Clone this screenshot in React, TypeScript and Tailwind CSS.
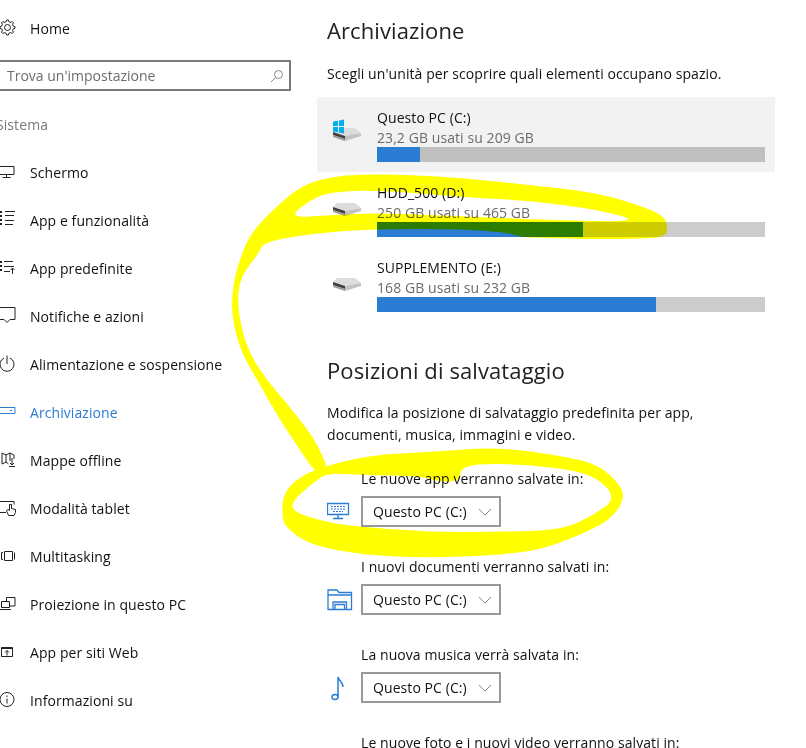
const font = "font-['Open_Sans',sans-serif]";

const I = ({ children }: { children: React.ReactNode }) => (
  <svg width="20" height="24" viewBox="0 0 20 24" fill="none" stroke="#222" strokeWidth="1" className="shrink-0">
    {children}
  </svg>
);

const gearPath = () => {
  let d = "";
  for (let i = 0; i < 32; i++) {
    const tooth = i % 4 < 2;
    const r = tooth ? 7.6 : 5.8;
    const a = ((i - 0.5) * Math.PI) / 16;
    d += `${i ? "L" : "M"}${(7.5 + r * Math.cos(a)).toFixed(2)} ${(11.5 + r * Math.sin(a)).toFixed(2)}`;
  }
  return d + "Z";
};

const Squares = ({ ys }: { ys: number[] }) => (
  <>
    {ys.map((y) => (
      <rect key={y} x="0" y={y} width="2" height="2" fill="#222" stroke="none" />
    ))}
  </>
);

const navItems = [
  { label: "Schermo", icon: <path d="M-2 6.500h16v8H-2M6.500 14.500v3M2.500 17.500h8" /> },
  { label: "App e funzionalità", icon: <><Squares ys={[3, 7, 11, 15]} /><path d="M5 3.500h10M5 7.500h9M5 12.500h9M5 16.500h8" /></> },
  { label: "App predefinite", icon: <><Squares ys={[5, 9, 13]} /><path d="M4 5.500h9M4 10.500h10M4 15.500h6M12.500 18v-6M10.500 14l2-2 2 2" /></> },
  { label: "Notifiche e azioni", icon: <path d="M-2 3.500h17v12h-5l-3 3-3-3h-6" /> },
  { label: "Alimentazione e sospensione", icon: <path d="M4 6A7 7 0 1 0 10 6M7 3.500V12" /> },
  { label: "Archiviazione", active: true, icon: <path d="M-2 7.500h17v6H-2M10 10.500h2" stroke="#2b7cd3" /> },
  { label: "Mappe offline", icon: <path d="M2 5l4 2 4-2 4 2v4M2 5v11l4-2 2.500 2M6 7v7M10 5v8M12 10v7M10 15l2 2 2-2M9 18.500h6" /> },
  { label: "Modalità tablet", icon: <path d="M-2 5.500h16v3M-2 16.500h8M9.500 8.500v6l-1.500-1-1.500 1 2 5h5.500l1.500-3v-3l-4-1v-4z" /> },
  { label: "Multitasking", icon: <path d="M4.500 7.500h8v9h-8zM3 8.500H1.500v7H3M14.500 8.500v7" /> },
  { label: "Proiezione in questo PC", icon: <path d="M6.500 9V5.500h8.500v8.500H10M1.500 9.500h8v6h-8zM0 17.500h11" /> },
  { label: "App per siti Web", icon: <path d="M1.500 7.500h11v9h-11zM1.500 8.500h11M7 15.500v-5M5 12.500l2-2 2 2" /> },
  { label: "Informazioni su", icon: <><circle cx="7" cy="11.500" r="7" /><path d="M7 10.500v5M7 7.500v1.500" /></> },
];

const drives = [
  { name: "Questo PC (C:)", usage: "23,2 GB usati su 209 GB", pct: 11, system: true },
  { name: "HDD_500 (D:)", usage: "250 GB usati su 465 GB", pct: 53.1 },
  { name: "SUPPLEMENTO (E:)", usage: "168 GB usati su 232 GB", pct: 72 },
];

const saves = [
  {
    label: "Le nuove app verranno salvate in:",
    icon: (
      <>
        <path d="M.5 4.500h21v11H.5z" strokeWidth="1.300" />
        <path d="M11 15.500v4M6 19.500h10" strokeWidth="1.300" />
        <path d="M4 7.500h14M4 10h14M6 12.500h10" strokeDasharray="2 1" />
      </>
    ),
  },
  {
    label: "I nuovi documenti verranno salvati in:",
    icon: (
      <path d="M1 22.500V3h9l2 2.500h12.500v17zM1 8h23.500M6 22.500v-7.500h13.500v7.500M8 22.500v-5h9.500v5" strokeWidth="1.300" />
    ),
  },
  {
    label: "La nuova musica verrà salvata in:",
    icon: (
      <>
        <ellipse cx="8" cy="22" rx="3" ry="2.400" strokeWidth="1.500" />
        <path d="M11 21.500V2c1 4 5 5 5 10" strokeWidth="1.500" />
      </>
    ),
  },
];

function Drive({ system }: { system?: boolean }) {
  return (
    <svg width="30" height="26" viewBox="0 0 30 26" className="shrink-0">
      <path d="M6 12h18l6 5-16 3-12-4z" fill="#dcdcdc" />
      <path d="M2 16l12 4v3L2 19z" fill="#3f3f3f" />
      <path d="M2 19l12 4v2L2 21z" fill="#9a9a9a" />
      <path d="M14 20l16-3v3l-16 5z" fill="#c2c2c2" />
      {system && (
        <path d="M2 5.500l5-.8v5.300H2zM8 4.500l5-1v6.500H8zM2 11h5v5.300l-5-.8zM8 11h5v6.500l-5-1z" fill="#00adef" />
      )}
    </svg>
  );
}

// turns traced outline points into a soft marker edge
const smooth = (pts: number[][]) => {
  const mid = (a: number[], b: number[]) => `${(a[0] + b[0]) / 2} ${(a[1] + b[1]) / 2}`;
  let d = `M${mid(pts[pts.length - 1], pts[0])}`;
  pts.forEach((p, i) => {
    d += `Q${p[0]} ${p[1]} ${mid(p, pts[(i + 1) % pts.length])}`;
  });
  return d + "Z";
};

const loopOuter = [
  [303, 185], [330, 177], [363, 174], [410, 175], [463, 178], [530, 185], [600, 193], [650, 209], [664, 217], [667, 224], [667, 237],
  [633, 239], [583, 239], [550, 238], [520, 237], [510, 233], [463, 229], [377, 229], [330, 232], [290, 237], [263, 243], [259, 253],
  [240, 277], [237, 307], [247, 350], [267, 380], [284, 400], [300, 420], [315, 440], [330, 472], [316, 474], [298, 447], [280, 420],
  [260, 385], [240, 350], [232, 317], [232, 293], [237, 267], [250, 233], [280, 203],
];
const loopHole = [
  [288, 218], [310, 200], [330, 192], [377, 190], [463, 197], [533, 201], [600, 210], [643, 222], [550, 220], [430, 215], [377, 213], [330, 215],
];
const ringOuter = [
  [318, 468], [370, 455], [430, 452], [497, 447], [563, 456], [600, 465], [623, 488], [623, 502], [610, 520], [580, 535], [540, 550],
  [497, 555], [430, 558], [363, 555], [310, 545], [285, 527], [282, 515], [283, 495], [295, 480],
];
const ringHole = [
  [327, 473], [363, 475], [420, 476], [440, 482], [460, 481], [461, 466], [497, 463], [563, 468], [597, 477], [616, 498], [597, 513],
  [563, 530], [497, 532], [430, 532], [363, 527], [330, 523], [292, 512], [293, 500], [313, 483],
];

export default function App() {
  return (
    <div className={`relative flex h-[748px] w-[806px] overflow-hidden bg-white tracking-[0.08px] text-[#111] ${font}`}>
      <aside className="w-[317px] shrink-0 text-[14px]">
        <div className="mt-1 flex h-12 items-center gap-[10px]">
          <I>
            <path d={gearPath()} />
            <circle cx="7.500" cy="11.500" r="3" />
          </I>
          <span>Home</span>
        </div>
        <div className="-ml-1 mt-2 flex h-[31px] w-[295px] items-center justify-between border-2 border-[#7a7a7a] pl-[9px] pr-[5px] tracking-normal text-[#6d6d6d]">
          <span>Trova un'impostazione</span>
          <svg width="14" height="14" viewBox="0 0 14 14" fill="none" stroke="#888" strokeWidth="1">
            <circle cx="8.500" cy="5.500" r="4" />
            <path d="M5.500 8.500L1 13" />
          </svg>
        </div>
        <div className="-ml-1 mt-[9px] flex h-12 items-center text-[#7a7a7a]">Sistema</div>
        <nav>
          {navItems.map((item) => (
            <div key={item.label} className={`flex h-12 items-center gap-[10px] ${item.active ? "text-[#2b7cd3]" : ""}`}>
              <I>{item.icon}</I>
              <span>{item.label}</span>
            </div>
          ))}
        </nav>
      </aside>

      <main className="w-[458px] shrink-0">
        <h1 className="ml-[10px] mt-[14px] text-[22px] leading-8 tracking-[0.1px] text-[#222]">Archiviazione</h1>
        <p className="ml-[10px] mt-[18px] text-[14px] leading-5">Scegli un'unità per scoprire quali elementi occupano spazio.</p>
        <div className="mt-[13px]">
          {drives.map((d) => (
            <div key={d.name} className={`flex h-[75px] pl-[14px] pr-[10px] ${d.system ? "bg-[#f2f2f2]" : ""}`}>
              <div className="mt-[19px] w-[46px]">
                <Drive system={d.system} />
              </div>
              <div className="flex-1 pt-[11px]">
                <div className="text-[14px] leading-5">{d.name}</div>
                <div className="text-[14px] leading-5 text-[#6b6b6b]">{d.usage}</div>
                <div className={`-mt-px h-[15px] ${d.system ? "bg-[#c0c0c0]" : "bg-[#cccccc]"}`}>
                  <div className="h-full bg-[#2b7cd3]" style={{ width: `${d.pct}%` }} />
                </div>
              </div>
            </div>
          ))}
        </div>
        <h2 className="ml-[10px] mt-[32px] text-[22px] leading-8 tracking-[0.1px] text-[#222]">Posizioni di salvataggio</h2>
        <p className="ml-[10px] mt-4 w-[420px] text-[14px] leading-[22px]">
          Modifica la posizione di salvataggio predefinita per app, documenti, musica, immagini e video.
        </p>
        <div className="ml-[10px] mt-[23px]">
          {saves.map((s) => (
            <div key={s.label} className="mb-[28px] h-[60px]">
              <div className="ml-[34px] text-[14px] leading-5">{s.label}</div>
              <div className="mt-[7px] flex items-center">
                <svg width="28" height="26" viewBox="0 0 28 26" fill="none" stroke="#2b7cd3" strokeWidth="1" className="mr-[6px] shrink-0">
                  {s.icon}
                </svg>
                <div className="flex h-[31px] w-[140px] items-center justify-between border-2 border-[#999] pl-[10px] pr-[7px] text-[14px]">
                  <span>Questo PC (C:)</span>
                  <svg width="14" height="8" viewBox="0 0 14 8" fill="none" stroke="#888" strokeWidth="1">
                    <path d="M1 1l6 6 6-6" />
                  </svg>
                </div>
              </div>
            </div>
          ))}
          <div className="ml-[34px] whitespace-nowrap text-[14px] leading-5">Le nuove foto e i nuovi video verranno salvati in:</div>
        </div>
      </main>

      {/* pennarello giallo sopra lo screenshot */}
      <svg width="806" height="748" viewBox="0 0 806 748" fill="#ffff00" fillRule="evenodd" className="pointer-events-none absolute left-0 top-0 mix-blend-multiply">
        <path d={smooth(loopOuter) + smooth(loopHole)} />
        <path d={smooth(ringOuter) + smooth(ringHole)} />
      </svg>
    </div>
  );
}
